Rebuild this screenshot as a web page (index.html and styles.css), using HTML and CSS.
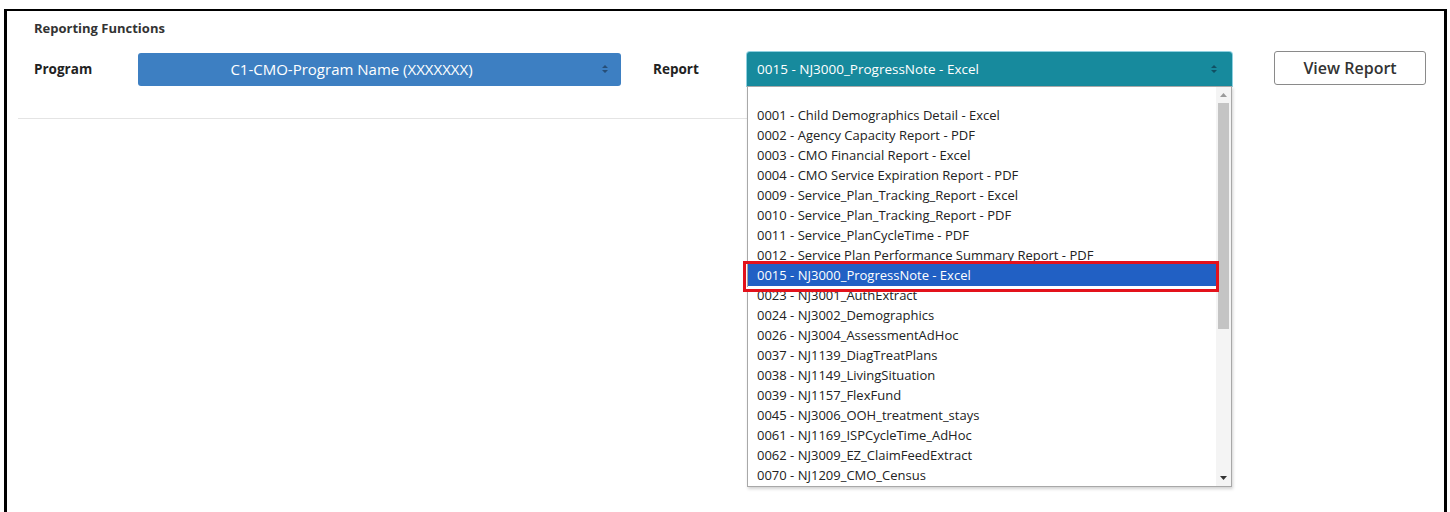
FILE: index.html
```html
<!DOCTYPE html>
<html lang="en">
<head>
<meta charset="utf-8">
<title>Reporting Functions</title>
<link rel="stylesheet" href="styles.css">
</head>
<body>
<div class="frame">
  <section class="panel">
    <h2 class="panel-title">Reporting Functions</h2>
    <div class="form-row">
      <label class="field-label field-label--program">Program</label>
      <div class="select select--program">
        <span class="select-value">C1-CMO-Program Name (XXXXXXX)</span>
        <svg class="select-arrows" width="8" height="10" viewBox="0 0 8 10"><path d="M1 4 L4 1 L7 4 Z M1 6 L4 9 L7 6 Z" fill="#24466b"/></svg>
      </div>
      <label class="field-label field-label--report">Report</label>
      <div class="select-wrap">
        <div class="select select--report">
          <span class="select-value">0015 - NJ3000_ProgressNote - Excel</span>
          <svg class="select-arrows" width="8" height="10" viewBox="0 0 8 10"><path d="M1 4 L4 1 L7 4 Z M1 6 L4 9 L7 6 Z" fill="#10465a"/></svg>
        </div>
        <div class="listbox">
          <ul class="options">
            <li class="option option--blank"></li>
            <li class="option">0001 - Child Demographics Detail - Excel</li>
            <li class="option">0002 - Agency Capacity Report - PDF</li>
            <li class="option">0003 - CMO Financial Report - Excel</li>
            <li class="option">0004 - CMO Service Expiration Report - PDF</li>
            <li class="option">0009 - Service_Plan_Tracking_Report - Excel</li>
            <li class="option">0010 - Service_Plan_Tracking_Report - PDF</li>
            <li class="option">0011 - Service_PlanCycleTime - PDF</li>
            <li class="option">0012 - Service Plan Performance Summary Report - PDF</li>
            <li class="option option--selected">0015 - NJ3000_ProgressNote - Excel</li>
            <li class="option">0023 - NJ3001_AuthExtract</li>
            <li class="option">0024 - NJ3002_Demographics</li>
            <li class="option">0026 - NJ3004_AssessmentAdHoc</li>
            <li class="option">0037 - NJ1139_DiagTreatPlans</li>
            <li class="option">0038 - NJ1149_LivingSituation</li>
            <li class="option">0039 - NJ1157_FlexFund</li>
            <li class="option">0045 - NJ3006_OOH_treatment_stays</li>
            <li class="option">0061 - NJ1169_ISPCycleTime_AdHoc</li>
            <li class="option">0062 - NJ3009_EZ_ClaimFeedExtract</li>
            <li class="option">0070 - NJ1209_CMO_Census</li>
          </ul>
          <div class="scrollbar">
            <svg class="scroll-arrow" width="7" height="4" viewBox="0 0 7 4"><path d="M0 4 L3.5 0 L7 4 Z" fill="#9a9a9a"/></svg>
            <div class="scroll-track"><div class="scroll-thumb"></div></div>
            <svg class="scroll-arrow" width="7" height="4" viewBox="0 0 7 4"><path d="M0 0 L3.5 4 L7 0 Z" fill="#333"/></svg>
          </div>
          <div class="callout"></div>
        </div>
      </div>
      <button class="btn-view" type="button">View Report</button>
    </div>
    <hr class="rule">
  </section>
</div>
</body>
</html>
```

FILE: styles.css
```css
html, body {
  margin: 0;
  padding: 0;
  background: #fff;
}

body {
  font-family: "Open Sans", "Noto Sans", sans-serif;
  color: #222;
}

.frame {
  margin: 9px 3px 0 4px;
  height: 503px;
  border-top: 2px solid #000;
  border-left: 3px solid #000;
  border-right: 3px solid #000;
  box-sizing: border-box;
}

.panel {
  padding: 0 11px;
}

.panel-title {
  margin: 0;
  padding: 9px 0 0 16px;
  font-size: 13px;
  line-height: 17px;
  font-weight: 700;
  color: #333;
}

.form-row {
  display: flex;
  align-items: center;
  padding-left: 16px;
  margin-top: 15px;
  height: 34px;
}

.field-label {
  font-size: 13.5px;
  font-weight: 700;
  color: #222;
}

.field-label--program {
  width: 104px;
}

.field-label--report {
  margin-left: 32px;
  width: 94px;
}

.select {
  position: relative;
  display: flex;
  align-items: center;
  box-sizing: border-box;
  border-radius: 3px;
  color: #fff;
}

.select-arrows {
  position: absolute;
  top: 50%;
  margin-top: -5px;
  opacity: 0.85;
}

.select--program {
  width: 483px;
  height: 33px;
  background: #3d7fc2;
  justify-content: center;
  padding-right: 56px;
  font-size: 15px;
}

.select--program .select-arrows {
  right: 12px;
}

.select-wrap {
  position: relative;
}

.select--report {
  width: 485px;
  height: 34px;
  background: #178a9d;
  padding-left: 10px;
  font-size: 13.5px;
  box-shadow: 0 0 0 1px #8fd0e0;
  border-radius: 3px 3px 0 0;
}

.select--report .select-arrows {
  right: 14px;
}

.listbox {
  position: absolute;
  left: 0;
  top: 100%;
  width: 485px;
  height: 401px;
  box-sizing: border-box;
  border: 1px solid #a8a8a8;
  background: #fff;
  display: flex;
  box-shadow: 1px 2px 3px rgba(0, 0, 0, 0.18);
  z-index: 2;
}

.options {
  list-style: none;
  margin: 0;
  padding: 0;
  flex: 1;
}

.option {
  height: 20px;
  line-height: 20px;
  padding-left: 9px;
  font-size: 13px;
  color: #222;
  white-space: nowrap;
}

.option--blank {
  height: 18px;
}

.option--selected {
  background: #2160c4;
  color: #fff;
  box-shadow: 0 -1px 0 #2160c4, 0 1px 0 #2160c4;
}

.scrollbar {
  width: 15px;
  background: #f4f4f4;
  display: flex;
  flex-direction: column;
  align-items: center;
}

.scroll-arrow {
  margin: 6px 0;
}

.scroll-track {
  flex: 1;
  width: 100%;
  display: flex;
  justify-content: center;
}

.scroll-thumb {
  width: 11px;
  height: 226px;
  background: #c4c4c4;
}

.callout {
  position: absolute;
  left: -5px;
  top: 174px;
  width: 476px;
  height: 31px;
  box-sizing: border-box;
  border: 3px solid #e3121b;
  box-shadow: inset 0 -2px 0 #fff;
  pointer-events: none;
}

.btn-view {
  margin-left: 42px;
  width: 152px;
  height: 34px;
  margin-top: -3px;
  background: #fff;
  border: 1px solid #8a8a8a;
  border-radius: 3px;
  font-family: "Open Sans", "Noto Sans", sans-serif;
  font-size: 16px;
  font-weight: 600;
  color: #333;
}

.rule {
  margin: 32px 0 0 0;
  width: 1214px;
  border: 0;
  border-top: 1px solid #e4e4e4;
}
```
